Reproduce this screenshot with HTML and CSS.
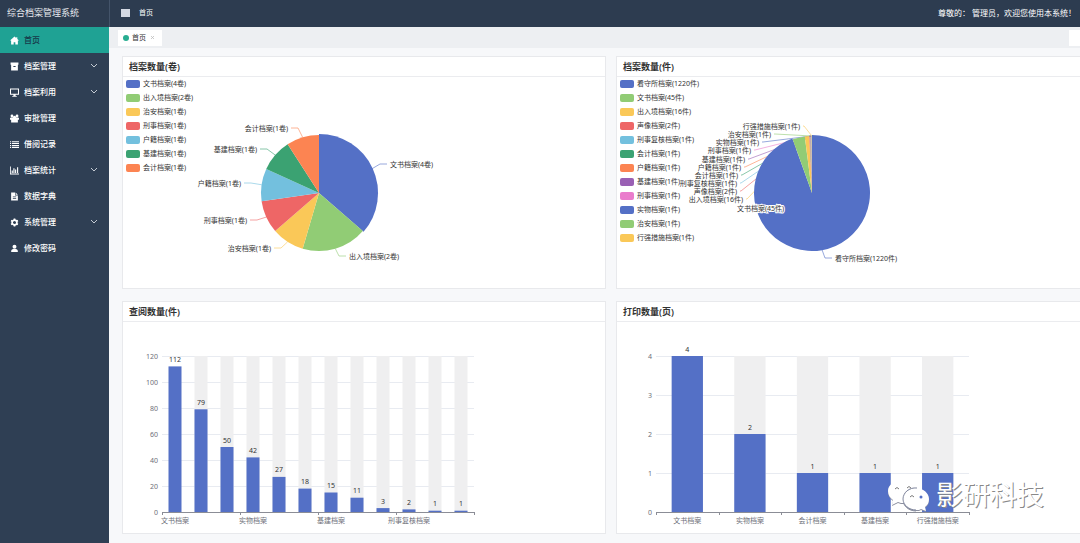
FILE: index.html
```html
<!DOCTYPE html>
<html lang="zh-CN">
<head>
<meta charset="utf-8">
<title>综合档案管理系统</title>
<link rel="stylesheet" href="styles.css">
</head>
<body>
<div class="app">
  <aside class="sidebar">
    <div class="brand">综合档案管理系统</div>
    <nav class="menu">
      <a class="menu-item active" href="#"><svg class="icon" viewBox="0 0 16 16"><path d="M8 1 0 8h2v7h4.500v-4h3v4H14V8h2l-3-2.700V2h-2v1.600z"/></svg><span>首页</span></a>
      <a class="menu-item" href="#"><svg class="icon" viewBox="0 0 16 16"><path d="M1 1h14v4H1zM2 5h12v10H2zM6 7v2h4V7z" fill-rule="evenodd"/></svg><span>档案管理</span><svg class="chevron" viewBox="0 0 8 8"><path d="m1 2 3 3 3-3"/></svg></a>
      <a class="menu-item" href="#"><svg class="icon" viewBox="0 0 16 16"><path d="M0 1h16v11H0zM1.800 2.800v7.400h12.400V2.800zM6 12h4v2h2v1.500H4V14h2z" fill-rule="evenodd"/></svg><span>档案利用</span><svg class="chevron" viewBox="0 0 8 8"><path d="m1 2 3 3 3-3"/></svg></a>
      <a class="menu-item" href="#"><svg class="icon" viewBox="0 0 16 16"><circle cx="3.500" cy="3.500" r="2.500"/><circle cx="12.500" cy="3.500" r="2.500"/><circle cx="8" cy="6" r="3"/><path d="M0 10V7q0-1 2-1h12q2 0 2 1v3h-2v5H2v-5z"/></svg><span>审批管理</span></a>
      <a class="menu-item" href="#"><svg class="icon" viewBox="0 0 16 16"><path d="M0 2h2v2H0zM3.500 2H16v2H3.500zM0 5.300h2v2H0zM3.500 5.300H16v2H3.500zM0 8.700h2v2H0zM3.500 8.700H16v2H3.500zM0 12h2v2H0zM3.500 12H16v2H3.500z"/></svg><span>借阅记录</span></a>
      <a class="menu-item" href="#"><svg class="icon" viewBox="0 0 16 16"><path d="M0 1h1.500v12.500H16V15H0zM3 8h2v4.500H3zM6 4h2v8.500H6zM9 6h2v6.500H9zM12.500 2h2v10.500h-2z"/></svg><span>档案统计</span><svg class="chevron" viewBox="0 0 8 8"><path d="m1 2 3 3 3-3"/></svg></a>
      <a class="menu-item" href="#"><svg class="icon" viewBox="0 0 16 16"><path d="M2 1h7v5h5v9H2zM10 1l4 4h-4zM5 8v1.500h6V8zM5 11v1.500h6V11z" fill-rule="evenodd"/></svg><span>数据字典</span></a>
      <a class="menu-item" href="#"><svg class="icon" viewBox="0 0 16 16"><circle class="gear-ring" cx="8" cy="8" r="4.200"/><path d="M6.500 1h3v3h-3zM6.500 12h3v3h-3zM1.200 5.800l1.500-2.600 2.600 1.500-1.500 2.600zM10.700 11.300l1.500-2.600 2.600 1.500-1.500 2.600zM1.200 10.200l2.600-1.500 1.500 2.600-2.600 1.500zM10.700 4.700l2.600-1.500 1.500 2.600-2.600 1.500z"/></svg><span>系统管理</span><svg class="chevron" viewBox="0 0 8 8"><path d="m1 2 3 3 3-3"/></svg></a>
      <a class="menu-item" href="#"><svg class="icon" viewBox="0 0 16 16"><circle cx="8" cy="5" r="3.500"/><path d="M2 14q0-5 4-5h4q4 0 4 5z"/></svg><span>修改密码</span></a>
    </nav>
  </aside>

  <div class="page">
    <header class="topbar">
      <button class="toggle" type="button" aria-label="菜单"></button>
      <a class="crumb" href="#">首页</a>
      <span class="greeting">尊敬的： 管理员，欢迎您使用本系统！</span>
    </header>
    <div class="tabs">
      <div class="tab"><span class="dot"></span><a href="#">首页</a><button class="close" type="button" aria-label="关闭"><svg viewBox="0 0 4 4"><path d="m0 0 4 4M4 0 0 4"/></svg></button></div>
      <button class="tabs-more" type="button" aria-label="更多"></button>
    </div>
    <main class="content">
      <section class="panel">
        <h2>档案数量(卷)</h2>
        <div class="panel-body"><ul class="legend" id="legend-volumes"></ul><svg class="chart" id="pie-volumes" viewBox="0 0 482 211" preserveAspectRatio="xMinYMin meet"></svg></div>
      </section>
      <section class="panel">
        <h2>档案数量(件)</h2>
        <div class="panel-body"><ul class="legend" id="legend-items"></ul><svg class="chart" id="pie-items" viewBox="0 0 482 211" preserveAspectRatio="xMinYMin meet"></svg></div>
      </section>
      <section class="panel">
        <h2>查阅数量(件)</h2>
        <div class="panel-body"><svg class="chart" id="bar-views" viewBox="0 0 482 211" preserveAspectRatio="xMinYMin meet"></svg></div>
      </section>
      <section class="panel">
        <h2>打印数量(页)</h2>
        <div class="panel-body"><svg class="chart" id="bar-prints" viewBox="0 0 482 211" preserveAspectRatio="xMinYMin meet"></svg></div>
      </section>
    </main>
  </div>

  <div class="watermark">
    <svg viewBox="0 0 44 32"><path class="bubble" d="M16 1C7 1 1 6 1 12c0 4 2 7 5 9l-1 5 6-3c2 1 4 1 6 1l3-1C13 15 20 9 30 9 28 4 22 1 16 1z"/><path class="bubble" d="M29 9c-7 0-13 5-13 11s6 11 13 11c2 0 4 0 5-1l5 2-1-4c3-2 4-5 4-8 0-6-6-11-13-11z"/><path class="rim" d="M30 9C22 8 16 14 16 20c0 6 6 11 13 11"/><path class="eye" d="M8 10q2-3 4 0M20 9q2-3 4 0M23 18q2-3 4 0"/><circle class="pupil" cx="34" cy="18" r="1.500"/></svg>
    <span>影研科技</span>
  </div>
</div>
<script src="charts.js"></script>
</body>
</html>
```

FILE: styles.css
```css
* { box-sizing: border-box; }
body {
  margin: 0;
  background: #f7f8fa;
  color: #333;
  font: 8px/12px "Noto Sans", "Noto Sans CJK SC", sans-serif;
}
a { color: inherit; text-decoration: none; }
button { border: 0; padding: 0; font: inherit; }

.app { position: relative; display: flex; min-height: 100vh; overflow: hidden; }

.sidebar { width: 109px; flex: none; background: #2f3f54; color: #fff; }
.brand {
  height: 27px;
  padding-left: 7px;
  background: #2d3c50;
  color: #e6e9ee;
  font-size: 9px;
  line-height: 25px;
}
.menu { display: flex; flex-direction: column; }
.menu-item {
  display: flex;
  align-items: center;
  height: 26px;
  padding: 0 11px 0 10px;
  gap: 5px;
  font-weight: 500;
}
.menu-item.active { background: #1fa294; }
.menu-item.active span { color: #17394a; }
.icon { width: 9px; height: 9px; fill: #fff; }
.gear-ring { fill: none; stroke: #fff; stroke-width: 3; }
.chevron { width: 8px; height: 8px; margin-left: auto; fill: none; stroke: #c5cbd3; }

.page { flex: 1; min-width: 0; }
.topbar {
  display: flex;
  align-items: center;
  height: 27px;
  padding: 0 4px 2px 11px;
  border-left: 1px solid #44546a;
  background: #2d3c50;
  color: #fff;
}
.toggle { width: 9px; height: 8px; background: #d3d8e2; }
.crumb { margin-left: 9px; font-size: 7px; }
.greeting { margin-left: auto; white-space: nowrap; }

.tabs {
  display: flex;
  align-items: center;
  justify-content: space-between;
  height: 21px;
  padding-left: 9px;
  background: #edeff2;
}
.tab {
  display: flex;
  align-items: center;
  width: 44px;
  height: 16px;
  padding-left: 5px;
  gap: 3px;
  background: #fff;
  font-size: 7px;
}
.dot { width: 6px; height: 6px; border-radius: 50%; background: #28ad91; }
.close { display: flex; margin-left: 2px; background: none; }
.close svg { width: 3px; height: 3px; fill: none; stroke: #bbb; stroke-width: 1; overflow: visible; }
.tabs-more { width: 11px; height: 16px; background: #fff; }

/* The right column runs past the window edge. */
.content {
  display: grid;
  grid-template-columns: 1fr 1fr;
  gap: 12px 10px;
  margin-right: -20px;
  padding: 8px 0 9px 13px;
}
.panel { border: 1px solid #e8e9ec; background: #fff; }
.panel h2 {
  margin: 0;
  padding-left: 6px;
  border-bottom: 1px solid #ebecef;
  font-size: 9px;
  font-weight: 600;
  line-height: 19px;
}
.panel-body { position: relative; }
.chart { display: block; width: 100%; height: 211px; font-size: 7px; fill: #333; }
.chart text { dominant-baseline: central; }

.legend {
  position: absolute;
  top: 0;
  left: 3px;
  margin: 0;
  padding: 0;
  list-style: none;
  font-size: 7px;
  line-height: 14px;
}
.legend li { display: flex; align-items: center; gap: 3px; white-space: nowrap; }
.swatch { width: 14px; height: 8px; border-radius: 2px; }

.leader { fill: none; stroke-width: 1; opacity: 0.6; }
.outlined { paint-order: stroke; stroke: #fff; stroke-width: 2px; }
.end { text-anchor: end; }
.mid { text-anchor: middle; }
.axis-text { fill: #6e7079; }
.grid-line { stroke: #e8ebf1; }
.axis-line { stroke: #8b8d96; }
.track { fill: #efeff0; }
.bar { fill: #5470c6; }

.watermark {
  position: absolute;
  right: 36px;
  bottom: 30px;
  display: flex;
  align-items: center;
  gap: 5px;
  color: #fff;
  font-size: 27px;
  line-height: 36px;
  text-shadow: 1px 1px 0 #888;
}
.watermark svg { width: 44px; height: 32px; overflow: visible; filter: drop-shadow(0 1px 0 #8c90a0); }
.bubble { fill: #fff; }
.rim { fill: none; stroke: #8389a0; }
.eye { fill: none; stroke: #777; }
.pupil { fill: #5470c6; }
```

FILE: charts.js
```js
const COLORS = ["#5470c6", "#91cc75", "#fac858", "#ee6666", "#73c0de", "#3ba272", "#fc8452", "#9a60b4", "#ea7ccc"];
const color = i => COLORS[i % COLORS.length];

function add(parent, tag, attrs, text) {
  const el = document.createElementNS("http://www.w3.org/2000/svg", tag);
  for (const key in attrs) el.setAttribute(key, attrs[key]);
  if (text !== undefined) el.textContent = text;
  parent.appendChild(el);
}

// Each row: name, value, label side, label x, label y.
function pie(id, unit, cx, cy, r, rows) {
  const svg = document.getElementById("pie-" + id);
  const legend = document.getElementById("legend-" + id);
  const total = rows.reduce((sum, row) => sum + row[1], 0);
  const point = (a, d) => [cx + d * Math.sin(a), cy - d * Math.cos(a)];
  let angle = 0;
  const slices = rows.map(([name, value, side, x, y], i) => {
    const start = angle;
    angle += value / total * Math.PI * 2;
    return { label: `${name}(${value}${unit})`, start, end: angle, mid: (start + angle) / 2, side, x, y, fill: color(i) };
  });
  slices.forEach(s => {
    const item = document.createElement("li");
    const swatch = document.createElement("span");
    swatch.className = "swatch";
    swatch.style.background = s.fill;
    item.append(swatch, s.label);
    legend.append(item);
    if (s.side === "over") return;
    const dir = s.side === "end" ? 1 : -1;
    const near = s.x + 3 * dir;
    const elbow = s.x + (rows.length > 8 && s.side === "end" ? 4 : 10) * dir;
    add(svg, "polyline", { class: "leader", stroke: s.fill, points: `${point(s.mid, r)} ${elbow},${s.y} ${near},${s.y}` });
  });
  slices.forEach((s, i) => {
    const radius = i ? r : r + 1;
    const large = s.end - s.start > Math.PI ? 1 : 0;
    add(svg, "path", { fill: s.fill, d: `M${cx},${cy}L${point(s.start, radius)}A${radius},${radius} 0 ${large} 1 ${point(s.end, radius)}Z` });
  });
  slices.forEach(s => add(svg, "text", { class: s.side === "over" ? "outlined" : s.side, x: s.x, y: s.y }, s.label));
}

function bars(id, o) {
  const svg = document.getElementById("bar-" + id);
  const top = 34, base = 190, left = 39;
  const y = v => base - (base - top) * v / o.max;
  for (let v = 0; v <= o.max; v += o.tick) {
    add(svg, "line", { class: v ? "grid-line" : "axis-line", x1: left, x2: left + o.step * o.values.length, y1: Math.round(y(v)) + 0.5, y2: Math.round(y(v)) + 0.5 });
    add(svg, "text", { class: "axis-text end", x: left - 4, y: y(v) }, v);
  }
  o.values.forEach((v, i) => {
    const mid = left + o.step * (i + 0.5), x = mid - o.step / 4;
    if (i) add(svg, "rect", { class: "track", x, y: top, width: o.step / 2, height: base - top });
    add(svg, "rect", { class: "bar", x, y: y(v), width: o.step / 2, height: base - y(v) });
    add(svg, "text", { class: "mid", x: mid, y: y(v) - 7 }, v);
  });
  for (let i = 0; i <= o.values.length; i += o.every) {
    const x = Math.round(left + o.step * i) + 0.5;
    add(svg, "line", { class: "axis-line", x1: x, x2: x, y1: base, y2: base + 3 });
    if (i < o.values.length) add(svg, "text", { class: "axis-text mid", x: left + o.step * (i + 0.5), y: base + 8 }, o.names[i / o.every]);
  }
}

pie("volumes", "卷", 196, 116, 58, [
  ["文书档案", 4, "start", 267, 87],
  ["出入境档案", 2, "start", 226, 179],
  ["治安档案", 1, "end", 148, 171],
  ["刑事档案", 1, "end", 124, 143],
  ["户籍档案", 1, "end", 118, 106],
  ["基建档案", 1, "end", 134, 72],
  ["会计档案", 1, "end", 165, 51]
]);
pie("items", "件", 195, 116, 57, [
  ["看守所档案", 1220, "start", 218, 181],
  ["文书档案", 45, "over", 120, 131],
  ["出入境档案", 16, "end", 126, 122],
  ["声像档案", 2, "end", 120, 114],
  ["刑事复核档案", 1, "end", 120, 106],
  ["会计档案", 1, "end", 121, 98],
  ["户籍档案", 1, "end", 124, 90],
  ["基建档案", 1, "end", 128, 82],
  ["刑事档案", 1, "end", 134, 73],
  ["实物档案", 1, "end", 142, 65],
  ["治安档案", 1, "end", 154, 57],
  ["行强措施档案", 1, "end", 183, 49]
]);
bars("views", { max: 120, tick: 20, step: 26, every: 3, values: [112, 79, 50, 42, 27, 18, 15, 11, 3, 2, 1, 1], names: ["文书档案", "实物档案", "基建档案", "刑事复核档案"] });
bars("prints", { max: 4, tick: 1, step: 62.6, every: 1, values: [4, 2, 1, 1, 1], names: ["文书档案", "实物档案", "会计档案", "基建档案", "行强措施档案"] });
```
